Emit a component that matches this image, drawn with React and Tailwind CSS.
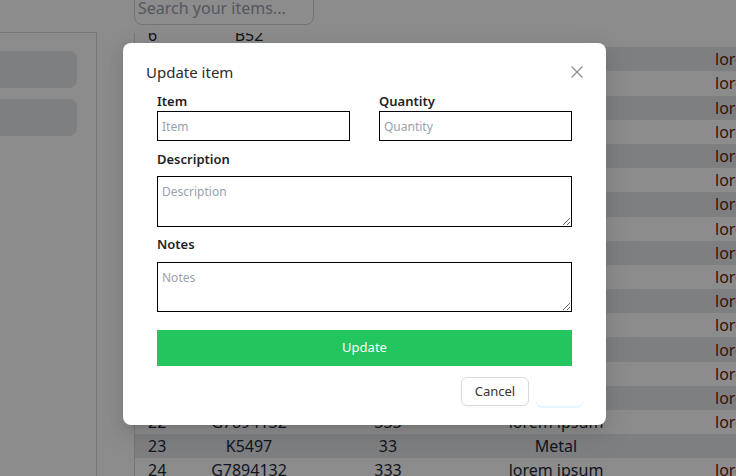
import React from 'react';

const rows = [];
for (let n = 6; n <= 24; n++) {
  const even = n % 2 === 0;
  let code = 'G7894132', qty = '333', type = 'lorem ipsum', note = 'lorem ipsum';
  if (n === 6) { code = 'B52'; qty = ''; type = ''; note = ''; }
  if (n === 23) { code = 'K5497'; qty = '33'; type = 'Metal'; note = ''; }
  rows.push({ n, even, code, qty, type, note });
}

function CloseIcon() {
  return (
    <svg width="12" height="12" viewBox="0 0 12 12" fill="none" stroke="#8c8c8c" strokeWidth="1.2">
      <path d="M0.5 0.5 L11.5 11.5 M11.5 0.5 L0.5 11.5" />
    </svg>
  );
}

export default function App() {
  return (
    <div className="relative w-[736px] h-[476px] overflow-hidden bg-white text-gray-800" style={{ fontFamily: '"Noto Sans", "Open Sans", sans-serif' }}>
      {/* page under the modal */}
      <div className="flex h-full">
        <aside className="mt-[32px] w-[97px] shrink-0 border-t border-r border-gray-300">
          <div className="mt-[18px] flex flex-col gap-[11px]">
            <div className="h-[37px] w-[77px] rounded-r-lg bg-gray-200" />
            <div className="h-[37px] w-[77px] rounded-r-lg bg-gray-200" />
          </div>
        </aside>
        <main className="ml-[37px] flex flex-1 flex-col">
          <input
            className="mt-[-10px] h-[35px] w-[180px] rounded-lg border border-gray-300 px-[3px] text-[16px] outline-none placeholder:text-gray-400"
            placeholder="Search your items..."
          />
          <div className="mt-[8px] flex-1 overflow-hidden border-l border-gray-300">
            <div className="mt-[-10px]">
              {rows.map((r) => (
                <div key={r.n} className={`grid h-[24.2px] grid-cols-[56px_116px_162px_174px_1fr] items-center text-[16px] leading-[24px] whitespace-nowrap ${r.even ? 'bg-white' : 'bg-gray-200'}`}>
                  <span className="pl-[13px]">{r.n}</span>
                  <span className="text-center">{r.code}</span>
                  <span className="text-center">{r.qty}</span>
                  <span className="text-center">{r.type}</span>
                  <span className="pl-[72px] text-[#6e1a10]">{r.note}</span>
                </div>
              ))}
            </div>
          </div>
        </main>
      </div>

      {/* overlay + modal */}
      <div className="absolute inset-0 bg-black/45">
        <div className="ml-[123px] mt-[43px] w-[483px] rounded-lg bg-white px-[23px] pt-[20px] pb-[19px] shadow-[0_6px_16px_0_rgba(0,0,0,0.08),0_3px_6px_-4px_rgba(0,0,0,0.12),0_9px_28px_8px_rgba(0,0,0,0.05)]">
          <div className="flex h-[18px] items-center justify-between">
            <h2 className="text-[15px] leading-[18px] text-[#2b2b2b]">Update item</h2>
            <button className="mr-[-2px] flex h-[16px] w-[16px] items-center justify-center">
              <CloseIcon />
            </button>
          </div>

          <form className="mt-[11px] px-[11px]" onSubmit={(e) => e.preventDefault()}>
            <div className="grid grid-cols-2 gap-x-[29px]">
              <div>
                <label className="block h-[18px] text-[13px] leading-[18px] font-semibold text-[#1f1f1f]">Item</label>
                <input className="mt-[1px] block h-[30px] w-full border border-black px-[4px] text-[12px] outline-none placeholder:text-gray-400" placeholder="Item" />
              </div>
              <div>
                <label className="block h-[18px] text-[13px] leading-[18px] font-semibold text-[#1f1f1f]">Quantity</label>
                <input className="mt-[1px] block h-[30px] w-full border border-black px-[4px] text-[12px] outline-none placeholder:text-gray-400" placeholder="Quantity" />
              </div>
            </div>

            <label className="mt-[9px] block h-[18px] text-[13px] leading-[18px] font-semibold text-[#1f1f1f]">Description</label>
            <textarea className="mt-[8px] block h-[51px] w-full border border-black px-[4px] pt-[6px] pb-[2px] text-[12px] outline-none placeholder:text-gray-400" placeholder="Description" />

            <label className="mt-[8px] block h-[18px] text-[13px] leading-[18px] font-semibold text-[#1f1f1f]">Notes</label>
            <textarea className="mt-[9px] block h-[50px] w-full border border-black px-[4px] pt-[6px] pb-[2px] text-[12px] outline-none placeholder:text-gray-400" placeholder="Notes" />

            <button type="submit" className="mt-[18px] block h-[36px] w-full bg-[#22c55e] text-[13px] text-white">Update</button>
          </form>

          <div className="mt-[11px] flex justify-end gap-[7px]">
            <button className="h-[29px] w-[68px] rounded-md border border-[#d9d9d9] bg-white text-[13px] text-[#333] shadow-[0_2px_0_rgba(0,0,0,0.02)]">Cancel</button>
            <button className="h-[29px] w-[47px] rounded-md bg-white text-[13px] text-white shadow-[0_2px_0_rgba(5,145,255,0.1)]">OK</button>
          </div>
        </div>
      </div>
    </div>
  );
}
